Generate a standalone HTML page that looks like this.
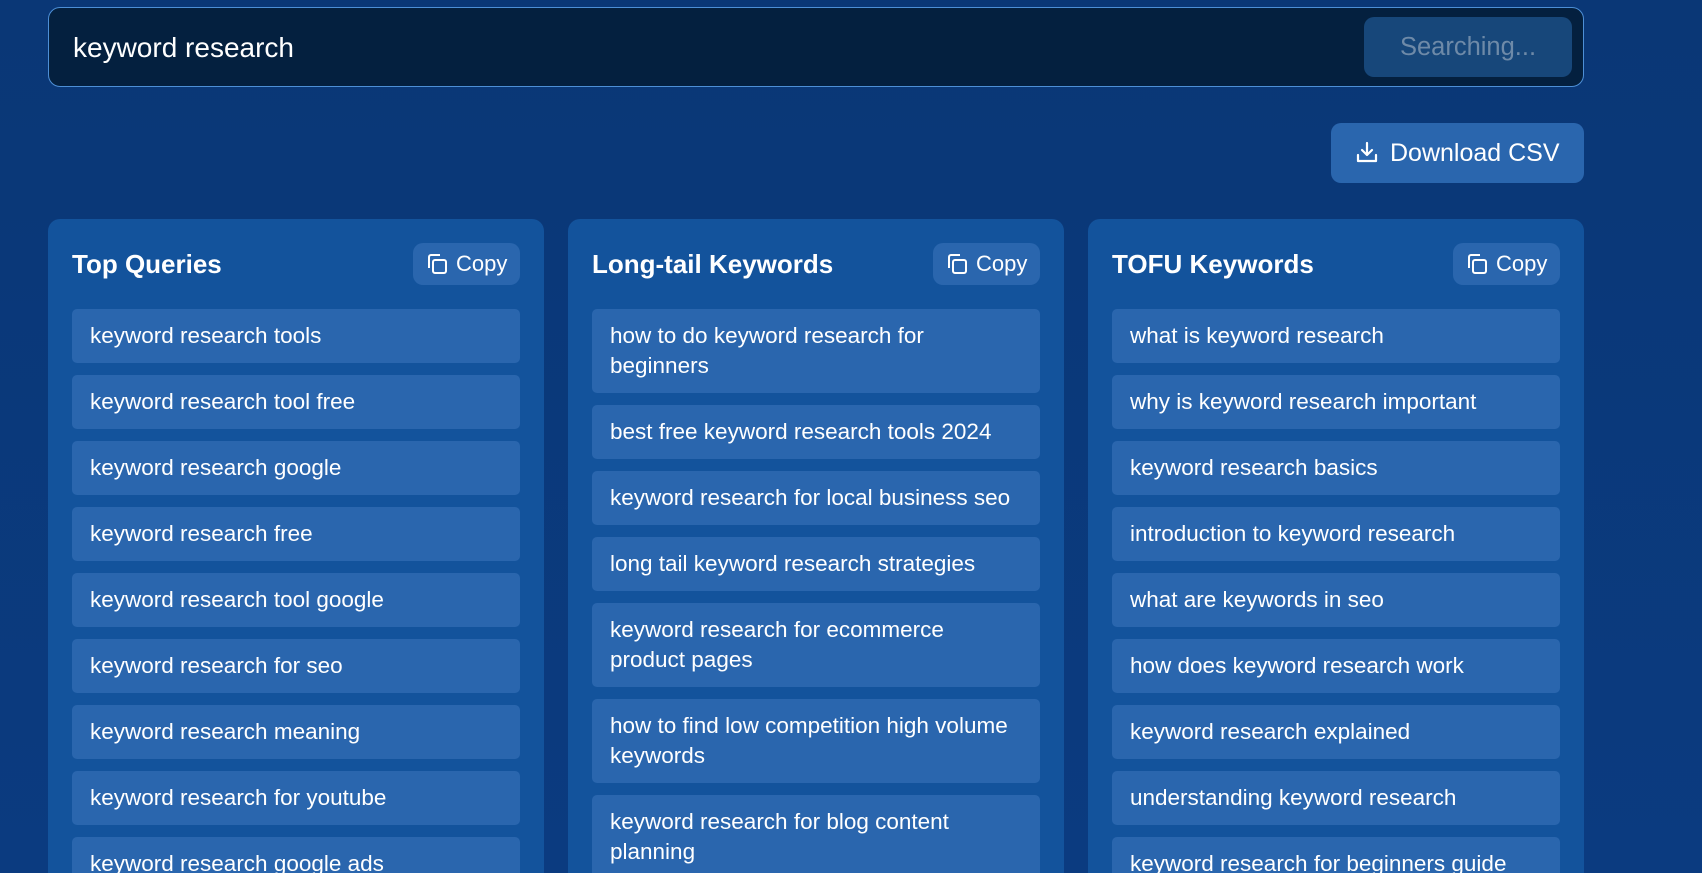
<!DOCTYPE html>
<html style="width:1702px;height:873px;overflow:hidden;background:#0b3b80"><head><meta charset="utf-8"><style>
*{box-sizing:border-box;margin:0;padding:0}
body{width:1702px;height:873px;overflow:hidden;background:linear-gradient(180deg,#0a3776 0%,#0b3b80 100%);font-family:"Liberation Sans",sans-serif;color:#fff;position:relative}
.search{position:absolute;left:48px;top:7px;width:1536px;height:80px;background:#04203f;border:1px solid #4d8fd6;border-radius:12px}
.search .q{position:absolute;left:24px;top:24px;font-size:28px}
.search .btn{position:absolute;right:11px;top:9px;width:208px;height:60px;background:#17477a;border-radius:10px;color:#6e8aa8;font-size:25.5px;text-align:center;line-height:60px}
.dl{position:absolute;left:1331px;top:123px;width:253px;height:60px;background:#2a66ae;border-radius:10px;font-size:25px;line-height:60px;padding-left:59px}
.dl svg{position:absolute;left:25px;top:18px}
.card{position:absolute;top:219px;width:496px;height:654px;overflow:hidden;background:#13539c;border-radius:12px 12px 0 0}
.card h2{position:absolute;left:24px;top:30px;font-size:26px;font-weight:bold}
.copy{position:absolute;right:24px;top:24px;width:107px;height:42px;background:#2a66ae;border-radius:10px;font-size:22px;line-height:42px;padding-left:43px}
.copy svg{position:absolute;left:13px;top:10px}
.items{position:absolute;left:24px;top:90px;right:24px}
.it{background:#2a66ae;border-radius:5px;padding:12px 18px;font-size:22.5px;line-height:30px;margin-bottom:12px;white-space:nowrap}
</style></head><body>
<div class="search"><div class="q">keyword research</div><div class="btn">Searching...</div></div>
<div class="dl"><svg width="22" height="22" viewBox="0 0 22 22" fill="none" stroke="#fff" stroke-width="2.2" stroke-linecap="round" stroke-linejoin="round"><path d="M11 2v11M6 9l5 5 5-5M2 14v6h18v-6"/></svg>Download CSV</div>

<div class="card" style="left:48px"><h2>Top Queries</h2>
<div class="copy"><svg width="22" height="22" viewBox="0 0 22 22" fill="none" stroke="#fff" stroke-width="2"><path d="M3 15V4a2 2 0 0 1 2-2h9"/><rect x="7" y="7" width="13" height="13" rx="2"/></svg>Copy</div>
<div class="items">
<div class="it">keyword research tools</div>
<div class="it">keyword research tool free</div>
<div class="it">keyword research google</div>
<div class="it">keyword research free</div>
<div class="it">keyword research tool google</div>
<div class="it">keyword research for seo</div>
<div class="it">keyword research meaning</div>
<div class="it">keyword research for youtube</div>
<div class="it">keyword research google ads</div>
</div></div>

<div class="card" style="left:568px"><h2>Long-tail Keywords</h2>
<div class="copy"><svg width="22" height="22" viewBox="0 0 22 22" fill="none" stroke="#fff" stroke-width="2"><path d="M3 15V4a2 2 0 0 1 2-2h9"/><rect x="7" y="7" width="13" height="13" rx="2"/></svg>Copy</div>
<div class="items">
<div class="it">how to do keyword research for<br>beginners</div>
<div class="it">best free keyword research tools 2024</div>
<div class="it">keyword research for local business seo</div>
<div class="it">long tail keyword research strategies</div>
<div class="it">keyword research for ecommerce<br>product pages</div>
<div class="it">how to find low competition high volume<br>keywords</div>
<div class="it">keyword research for blog content<br>planning</div>
</div></div>

<div class="card" style="left:1088px"><h2>TOFU Keywords</h2>
<div class="copy"><svg width="22" height="22" viewBox="0 0 22 22" fill="none" stroke="#fff" stroke-width="2"><path d="M3 15V4a2 2 0 0 1 2-2h9"/><rect x="7" y="7" width="13" height="13" rx="2"/></svg>Copy</div>
<div class="items">
<div class="it">what is keyword research</div>
<div class="it">why is keyword research important</div>
<div class="it">keyword research basics</div>
<div class="it">introduction to keyword research</div>
<div class="it">what are keywords in seo</div>
<div class="it">how does keyword research work</div>
<div class="it">keyword research explained</div>
<div class="it">understanding keyword research</div>
<div class="it">keyword research for beginners guide</div>
</div></div>
</body></html>
